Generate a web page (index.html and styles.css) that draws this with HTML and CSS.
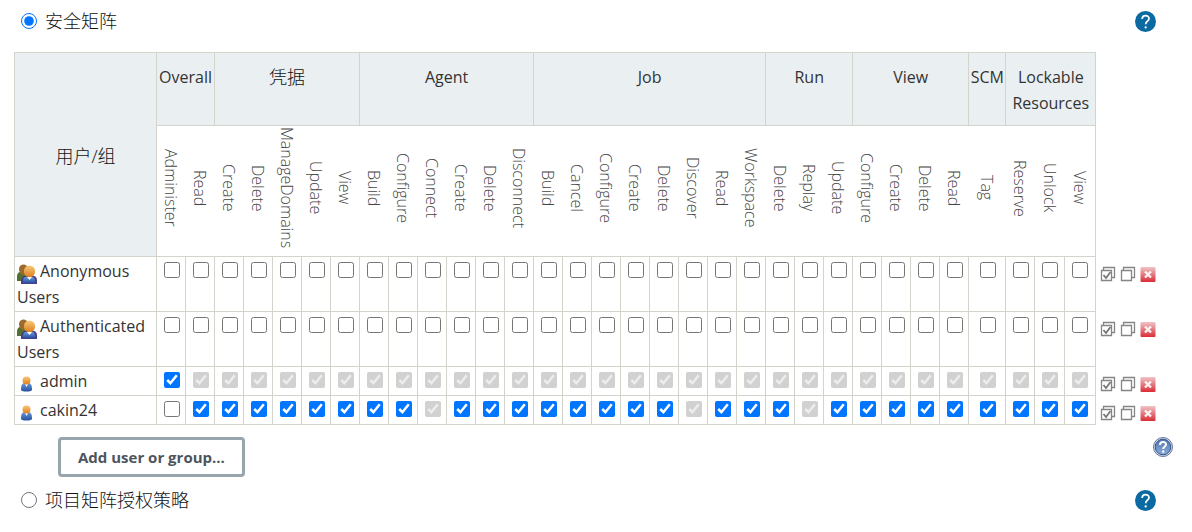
FILE: index.html
```html
<!DOCTYPE html>
<html lang="zh-CN">
<head>
  <meta charset="UTF-8" />
  <meta name="viewport" content="width=device-width, initial-scale=1.0"/>
  <title>安全矩阵</title>
  <link rel="stylesheet" href="styles.css">
</head>
<body>
  <svg class="sprite" aria-hidden="true">
    <defs>
      <linearGradient id="skin" x1="0" y1="0" x2="0" y2="1">
        <stop offset="0" stop-color="#f8c878"/>
        <stop offset="1" stop-color="#dd8020"/>
      </linearGradient>
      <linearGradient id="shirt" x1="0" y1="0" x2="0" y2="1">
        <stop offset="0" stop-color="#6c9bd8"/>
        <stop offset="1" stop-color="#2450a0"/>
      </linearGradient>
      <linearGradient id="red" x1="0" y1="0" x2="0" y2="1">
        <stop offset="0" stop-color="#f0c4c6"/>
        <stop offset="0.500" stop-color="#e27a80"/>
        <stop offset="1" stop-color="#dc2c36"/>
      </linearGradient>
      <linearGradient id="blue" x1="0" y1="0" x2="0" y2="1">
        <stop offset="0" stop-color="#5275b0"/>
        <stop offset="1" stop-color="#89add8"/>
      </linearGradient>
    </defs>
    <symbol id="group" viewBox="0 0 20 20">
      <path d="M0 17v-4c0-3 1-5 4-5h4c2 0 3 3 3 5v4z" fill="#52702f"/>
      <path d="M2 5c0-6 9-6 9 0 0 3-1 6-4 6S2 8 2 5z" fill="#9d6b2d"/>
      <path d="M4 20v-3c0-3 2-5 5-5h7c3 0 4 2 4 5v3z" fill="#4a3f8e"/>
      <path d="M6 19v-2c0-2 1-4 3-4h6c2 0 3 2 3 4v2z" fill="url(#shirt)"/>
      <path d="M10 13l2.500 3 2.500-3z" fill="#fff"/>
      <path d="M7 7c0-7 11-7 11 0 0 4-2 6-5.500 6S7 11 7 7z" fill="url(#skin)"/>
    </symbol>
    <symbol id="user" viewBox="0 0 20 20">
      <path d="M4 16c0-5 1-7 4-7h3c3 0 4 2 4 7-1 2-10 2-11 0z" fill="url(#shirt)"/>
      <path d="M8 10l1.500 3 1.500-3z" fill="#fff"/>
      <circle cx="9.500" cy="6.500" r="4" fill="url(#skin)"/>
    </symbol>
    <symbol id="select" viewBox="0 0 16 16">
      <path d="M3.500 4v-2.500h11v10h-2.500M1.500 4.500h10v10h-10z" fill="none" stroke="#858585" stroke-width="1.300"/>
      <path d="M3.500 9l2.500 3 4.500-6" fill="none" stroke="#777" stroke-width="1.800"/>
    </symbol>
    <symbol id="unselect" viewBox="0 0 16 16">
      <path d="M3.500 4v-2.500h11v10h-2.500M1.500 4.500h10v10h-10z" fill="none" stroke="#858585" stroke-width="1.300"/>
    </symbol>
    <symbol id="remove" viewBox="0 0 16 16">
      <rect x="0.500" y="1" width="15" height="15" rx="1" fill="url(#red)"/>
      <path d="M5 5.500l6 6M11 5.500l-6 6" stroke="#fff" stroke-width="2.400" stroke-opacity="0.900"/>
    </symbol>
    <symbol id="help" viewBox="0 0 24 24">
      <circle cx="12" cy="12" r="12" fill="#0b6aa2"/>
      <path d="M8.200 9.200c0-5.200 7.800-5 7.800-.4 0 2.700-3.800 3.100-3.800 6.200" fill="none" stroke="#fff" stroke-width="2"/>
      <circle cx="12.200" cy="18.800" r="1.300" fill="#fff"/>
    </symbol>
    <symbol id="help-old" viewBox="0 0 20 20">
      <circle cx="10" cy="10" r="9.500" fill="#d5dce8" stroke="#63779d"/>
      <circle cx="10" cy="10" r="7.800" fill="url(#blue)" stroke="#35568f"/>
      <path d="M7 8c0-4 6-4 6-.5 0 2-2.800 2-2.800 4.500" fill="none" stroke="#fff" stroke-width="2"/>
      <circle cx="10.200" cy="14.500" r="1.200" fill="#fff"/>
    </symbol>
  </svg>

  <main class="strategies">
    <div class="strategy">
      <input type="radio" name="authorization" id="matrix" checked />
      <label for="matrix">安全矩阵</label>
      <a class="help" href="#" aria-label="Help"><svg><use href="#help"/></svg></a>
    </div>

    <table class="matrix">
      <colgroup>
        <col class="col-name">
        <col class="col-perm" span="28">
        <col class="col-scm">
        <col class="col-perm">
        <col class="col-unlock">
        <col class="col-last">
        <col>
      </colgroup>
      <thead>
        <tr class="groups" id="groups">
          <th class="pane-header name-header" rowspan="2"><span class="cn">用户/组</span></th>
        </tr>
        <tr class="perms" id="perms"></tr>
      </thead>
      <tbody id="users"></tbody>
    </table>

    <div class="add-row">
      <button type="button" class="add-button">Add user or group...</button>
      <a class="help-old" href="#" aria-label="Help"><svg><use href="#help-old"/></svg></a>
    </div>

    <div class="strategy">
      <input type="radio" name="authorization" id="project-matrix" />
      <label for="project-matrix">项目矩阵授权策略</label>
      <a class="help" href="#" aria-label="Help"><svg><use href="#help"/></svg></a>
    </div>
  </main>

  <script>
    const groups = [
      ["Overall", ["Administer", "Read"]],
      ['<span class="cn">凭据</span>', ["Create", "Delete", "ManageDomains", "Update", "View"]],
      ["Agent", ["Build", "Configure", "Connect", "Create", "Delete", "Disconnect"]],
      ["Job", ["Build", "Cancel", "Configure", "Create", "Delete", "Discover", "Read", "Workspace"]],
      ["Run", ["Delete", "Replay", "Update"]],
      ["View", ["Configure", "Create", "Delete", "Read"]],
      ["SCM", ["Tag"]],
      ["Lockable Resources", ["Reserve", "Unlock", "View"]],
    ];
    const perms = groups.flatMap(([group, names]) =>
      names.map((name) => group.replace(/<[^>]+>/g, "") + "/" + name));
    const implied = ["Agent/Connect", "Job/Discover", "Run/Replay"];

    // state() gives the attributes of one checkbox
    const users = [
      { name: "Anonymous Users", icon: "group", state: () => "" },
      { name: "Authenticated Users", icon: "group", state: () => "" },
      { name: "admin", icon: "user", state: (p) => p === "Overall/Administer" ? "checked" : "checked disabled" },
      {
        name: "cakin24", icon: "user",
        state: (p) => p === "Overall/Administer" ? "" : implied.includes(p) ? "checked disabled" : "checked",
      },
    ];

    // Header rows
    groups.forEach(([group, names]) => {
      document.getElementById("groups").insertAdjacentHTML("beforeend",
        `<th class="pane-header" colspan="${names.length}">${group}</th>`);
      names.forEach((name) => {
        document.getElementById("perms").insertAdjacentHTML("beforeend",
          `<th><span>${name}</span></th>`);
      });
    });

    // One row for each user or group
    document.getElementById("users").innerHTML = users.map((user) => `
      <tr>
        <td class="name"><svg><use href="#${user.icon}"/></svg>${user.name}</td>
        ${perms.map((p) => `<td class="perm"><input type="checkbox" aria-label="${user.name} ${p}" ${user.state(p)}></td>`).join("")}
        <td class="actions">
          <div>
            <button type="button" aria-label="Select all"><svg><use href="#select"/></svg></button>
            <button type="button" aria-label="Unselect all"><svg><use href="#unselect"/></svg></button>
            <button type="button" aria-label="Remove"><svg><use href="#remove"/></svg></button>
          </div>
        </td>
      </tr>`).join("");
  </script>
</body>
</html>
```
FILE: styles.css
```css
body {
  margin: 0;
  background: #fff;
  color: #333;
  font-family: "Open Sans", "Noto Sans CJK SC", sans-serif;
  font-size: 16px;
  line-height: 26px;
}
.sprite {
  position: absolute;
  width: 0;
  height: 0;
}
svg {
  display: block;
}
.strategies {
  padding: 8px 14px;
}
.strategy {
  display: flex;
  align-items: center;
  padding: 0 22px 0 7px;
  color: #111;
  font-size: 18px;
  font-weight: 300;
}
.strategy input {
  width: 16px;
  height: 16px;
  margin: 0 8px 0 0;
}
.help {
  margin-left: auto;
}
.help svg {
  width: 21px;
  height: 21px;
}
.matrix {
  table-layout: fixed;
  width: 100%;
  margin-top: 18px;
  border-collapse: collapse;
}
.col-name {
  width: 142px;
}
.col-perm {
  width: 29px;
}
.col-scm {
  width: 37px;
}
.col-unlock {
  width: 30px;
}
.col-last {
  width: 31px;
}
.matrix th,
.matrix td {
  padding: 0;
  font-weight: 400;
  vertical-align: top;
}
.matrix .pane-header {
  padding: 11px 0 9px;
  border: 1px solid #d3d4cc;
  background: #eaeff2;
}
.matrix .name-header {
  vertical-align: middle;
}
.cn {
  display: block;
  color: #111;
  font-size: 18px;
  font-weight: 300;
}
.perms th {
  height: 130px;
}
.perms th:last-child {
  border-right: 1px solid #d3d4cc;
}
.perms span {
  display: block;
  height: 124px;
  margin: 0 auto;
  color: #444;
  font-weight: 300;
  writing-mode: vertical-rl;
  white-space: nowrap;
}
.matrix .name,
.matrix .perm {
  padding: 1px 2px;
  border: 1px solid #d3d4cc;
}
.name svg {
  float: left;
  width: 20px;
  height: 20px;
  margin: 6px 3px 0 0;
}
.perm input {
  display: block;
  width: 16px;
  height: 16px;
  margin: 4px 0 4px 5px;
}
/* the SCM column is wider than the others */
.perm:nth-child(30) input {
  margin-left: 9px;
}
.actions div {
  display: flex;
  gap: 4px;
  padding: 9px 0 0 4px;
}
.actions button {
  padding: 0;
  border: none;
  background: none;
  cursor: pointer;
}
.actions svg {
  width: 16px;
  height: 16px;
}
.add-row {
  display: flex;
  justify-content: space-between;
  align-items: flex-start;
  padding: 12px 5px 10px 44px;
}
.add-button {
  padding: 6px 17px;
  border: 3px solid #98a5ad;
  border-radius: 4px;
  background: #fff;
  color: #4d545d;
  font: bold 15px/22px "Open Sans", sans-serif;
  cursor: pointer;
}
.help-old svg {
  width: 20px;
  height: 20px;
}
```
